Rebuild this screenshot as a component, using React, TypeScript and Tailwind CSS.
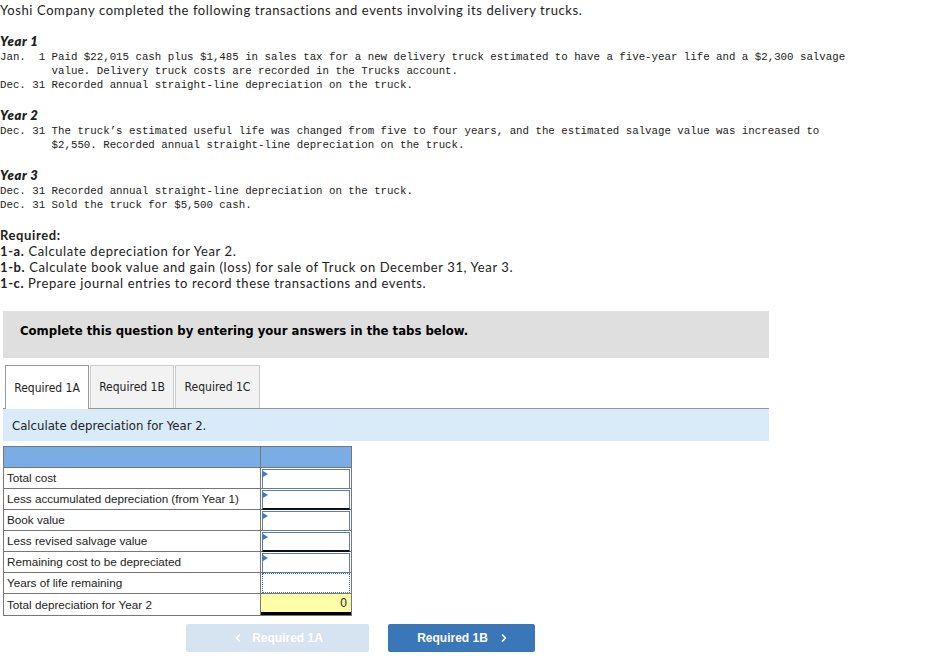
import type { FC } from "react";
import { ChevronLeft, ChevronRight } from "lucide-react";

const sans = "font-['Lato','Open_Sans',sans-serif] tracking-[0.6px]";
const mono = "font-['Liberation_Mono',monospace]";
const tahoma = "font-['DejaVu_Sans_Condensed','DejaVu_Sans',sans-serif]";

const MonoLines: FC<{ lines: string[] }> = ({ lines }) => (
    <div className={`${mono} text-[10.75px] leading-[14px] text-[#222] whitespace-pre`}>
        {lines.map((l, i) => (
            <div key={i}>{l}</div>
        ))}
    </div>
);

const YearHead: FC<{ label: string }> = ({ label }) => (
    <div className={`${sans} mt-[15px] text-[13px] leading-[16px] font-extrabold italic text-[#222]`}>{label}</div>
);

type Row = { label: string; kind: "input" | "dotted" | "total"; thick?: boolean };

const rows: Row[] = [
    { label: "Total cost", kind: "input" },
    { label: "Less accumulated depreciation (from Year 1)", kind: "input", thick: true },
    { label: "Book value", kind: "input" },
    { label: "Less revised salvage value", kind: "input", thick: true },
    { label: "Remaining cost to be depreciated", kind: "input" },
    { label: "Years of life remaining", kind: "dotted" },
    { label: "Total depreciation for Year 2", kind: "total" },
];

const ValueCell: FC<{ row: Row }> = ({ row }) => {
    if (row.kind === "total") {
        return (
            <div className="h-full bg-[#ffffa8] border-b-[3px] border-black flex items-center justify-end pr-[4px] text-[12px] text-[#222]">
                0
            </div>
        );
    }
    if (row.kind === "dotted") {
        return <div className="h-full mx-[1px] border border-dotted border-[#3b6fb6]"></div>;
    }
    return (
        <div
            className={`relative h-full mx-[1px] mt-[1px] border border-[#5c7ea6] bg-white ${
                row.thick ? "border-b-[2px] border-b-[#111]" : ""
            }`}
        >
            <span className="absolute left-0 top-[1px] w-0 h-0 border-y-[3px] border-y-transparent border-l-[5px] border-l-[#3b7bd0]"></span>
        </div>
    );
};

const App: FC = () => {
    return (
        <div className="w-[951px] h-[666px] bg-white overflow-hidden">
            <div className={`${sans} pt-[2px] text-[13px] leading-[16px] text-[#222]`}>
                Yoshi Company completed the following transactions and events involving its delivery trucks.
            </div>

            <YearHead label="Year 1" />
            <div className="mt-[1px]">
                <MonoLines
                    lines={[
                        "Jan.  1 Paid $22,015 cash plus $1,485 in sales tax for a new delivery truck estimated to have a five-year life and a $2,300 salvage",
                        "        value. Delivery truck costs are recorded in the Trucks account.",
                        "Dec. 31 Recorded annual straight-line depreciation on the truck.",
                    ]}
                />
            </div>

            <YearHead label="Year 2" />
            <div className="mt-[1px]">
                <MonoLines
                    lines={[
                        "Dec. 31 The truck\u2019s estimated useful life was changed from five to four years, and the estimated salvage value was increased to",
                        "        $2,550. Recorded annual straight-line depreciation on the truck.",
                    ]}
                />
            </div>

            <YearHead label="Year 3" />
            <div className="mt-[1px]">
                <MonoLines
                    lines={[
                        "Dec. 31 Recorded annual straight-line depreciation on the truck.",
                        "Dec. 31 Sold the truck for $5,500 cash.",
                    ]}
                />
            </div>

            <div className={`${sans} mt-[15px] text-[13px] leading-[16px] text-[#222]`}>
                <div className="font-bold">Required:</div>
                <div>
                    <span className="font-bold">1-a.</span> Calculate depreciation for Year 2.
                </div>
                <div>
                    <span className="font-bold">1-b.</span> Calculate book value and gain (loss) for sale of Truck on December 31, Year 3.
                </div>
                <div>
                    <span className="font-bold">1-c.</span> Prepare journal entries to record these transactions and events.
                </div>
            </div>

            <div className="ml-[3px] w-[766px]">
                <div className={`${tahoma} mt-[20px] h-[47px] bg-[#dfdfdf] flex items-center pl-[17px] pb-[8px] text-[13px] font-bold text-black`}>
                    Complete this question by entering your answers in the tabs below.
                </div>

                <div className={`${tahoma} mt-[7px] flex items-end gap-[1px] pl-[2px] border-b border-[#999] h-[44px] text-[12px] text-[#222]`}>
                    <div className="w-[84px] h-[44px] -mb-[1px] bg-white border border-b-0 border-[#999] flex items-center justify-center">
                        Required 1A
                    </div>
                    <div className="w-[84px] h-[43px] bg-[#f2f2f2] border border-b-0 border-[#ccc] flex items-center justify-center">
                        Required 1B
                    </div>
                    <div className="w-[85px] h-[43px] bg-[#f2f2f2] border border-b-0 border-[#ccc] flex items-center justify-center">
                        Required 1C
                    </div>
                </div>

                <div className={`${tahoma} h-[32px] bg-[#d9ebf9] flex items-center pl-[9px] pt-[1px] text-[13px] text-[#222]`}>
                    Calculate depreciation for Year 2.
                </div>

                <div className="mt-[5px] w-[349px] border border-[#777] font-['Liberation_Sans',Arial,sans-serif] text-[11.7px] text-[#222]">
                    <div className="grid grid-cols-[257px_1fr] h-[21px] bg-[#7aade6] border-b border-[#777]">
                        <div className="border-r border-[#777]"></div>
                        <div></div>
                    </div>
                    {rows.map((r, i) => (
                        <div
                            key={r.label}
                            className={`grid grid-cols-[257px_1fr] h-[21px] ${i < rows.length - 1 ? "border-b border-[#777]" : ""}`}
                        >
                            <div className="border-r border-[#777] flex items-center pl-[3px]">{r.label}</div>
                            <ValueCell row={r} />
                        </div>
                    ))}
                </div>

                <div className="mt-[8px] ml-[183px] flex gap-[19px] font-['Liberation_Sans',Arial,sans-serif] text-[12px] font-bold text-white">
                    <div className="w-[183px] h-[28px] rounded-[2px] bg-[#d6e3f0] flex items-center justify-center gap-[8px]">
                        <ChevronLeft size={12} strokeWidth={3.5} />
                        <span>Required 1A</span>
                    </div>
                    <div className="w-[147px] h-[28px] rounded-[2px] bg-[#3a77b9] flex items-center justify-center gap-[10px] pl-[4px]">
                        <span>Required 1B</span>
                        <ChevronRight size={12} strokeWidth={3.5} />
                    </div>
                </div>
            </div>
        </div>
    );
};

export default App;
